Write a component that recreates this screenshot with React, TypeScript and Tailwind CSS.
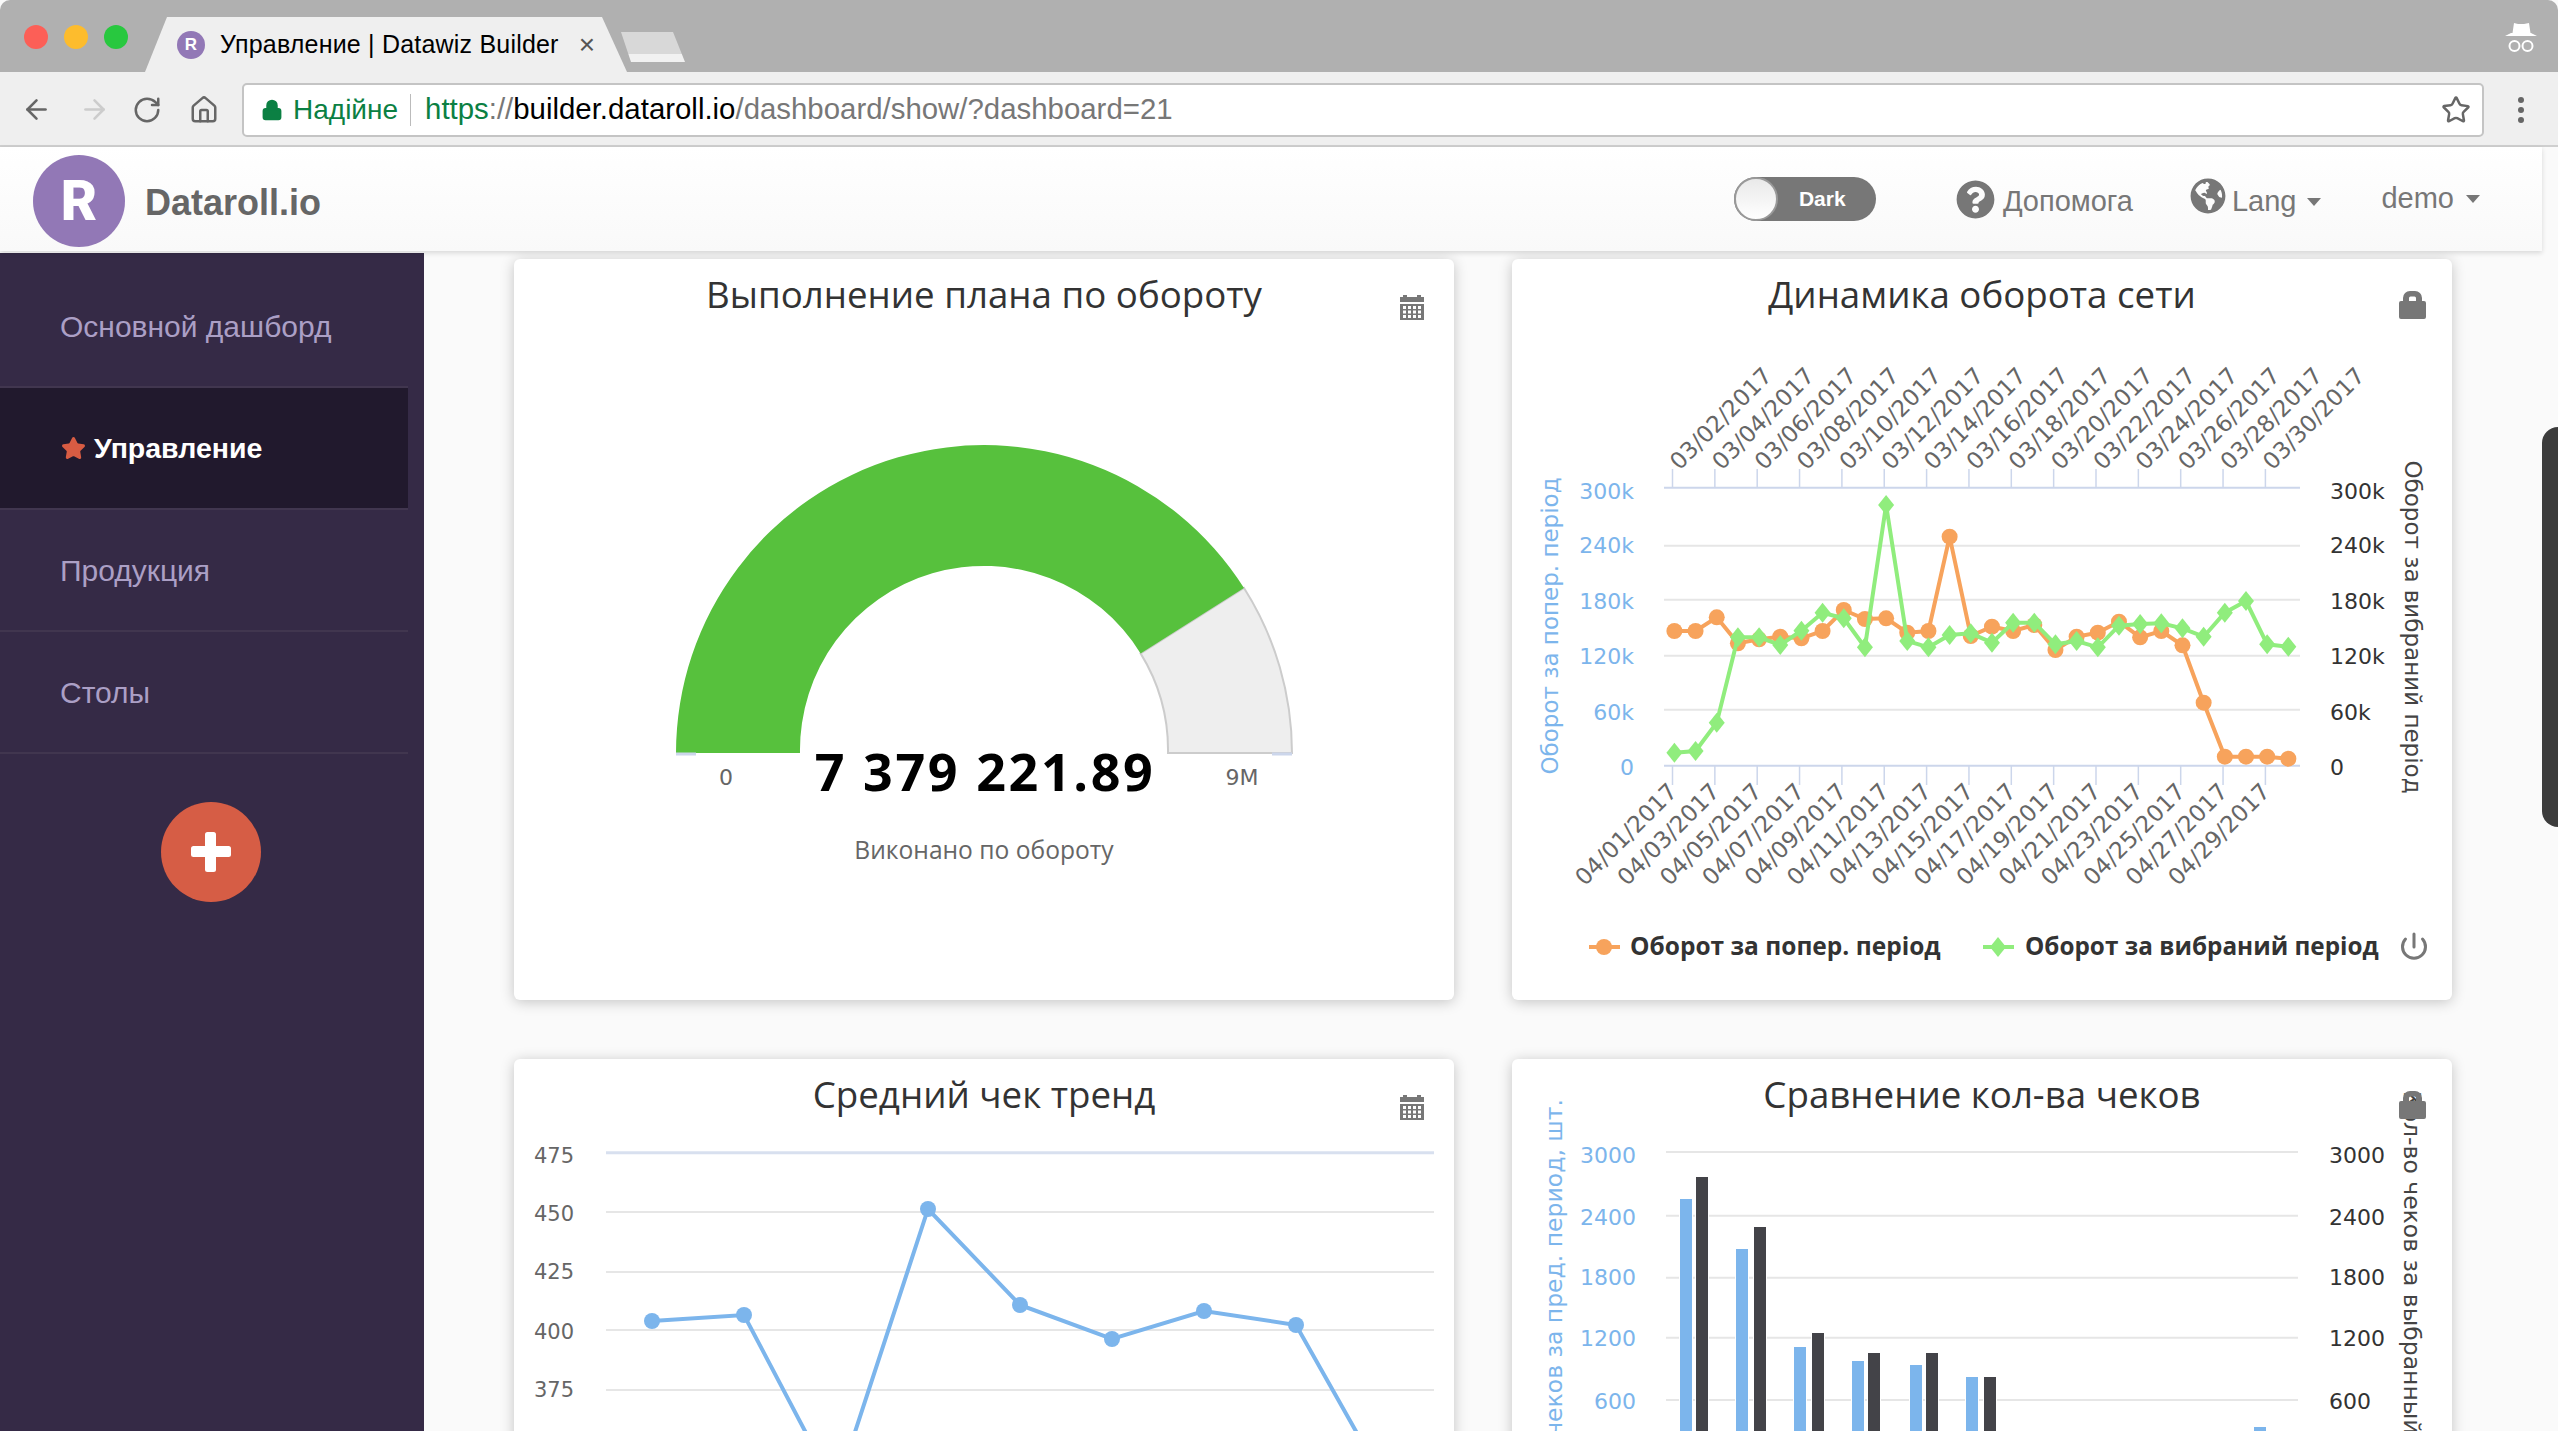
import { ArrowLeft, ArrowRight, Home, RotateCw, Lock, Star } from 'lucide-react';
import { FaGlobeAmericas, FaQuestionCircle } from 'react-icons/fa';

const CHART_FONT = '"DejaVu Sans", sans-serif';

// y positions are in card pixels, the x step is fixed (30 days)
const stepX = (i: number) => 162.4 + i * 21.17;
const prevPeriod = [372, 372, 358.3, 384.3, 380.3, 377.7, 379.3, 372, 351, 360, 359.3, 373.7, 372, 277.7, 377, 367.7, 372, 366, 391, 377.7, 373.7, 362.7, 378.3, 372, 386.3, 443.7, 497.7, 497.7, 497.7, 499.7];
const curPeriod = [493.7, 492, 463.7, 378.3, 378.3, 386, 371.7, 353.7, 359.3, 388.3, 246, 382, 388.3, 376, 374.3, 383.7, 363.7, 363.7, 385.3, 382, 388.3, 366.7, 365, 364.3, 369.3, 377.7, 353.7, 342, 385.3, 387.7];

const marchDays = ['02', '04', '06', '08', '10', '12', '14', '16', '18', '20', '22', '24', '26', '28', '30'];
const aprilDays = ['01', '03', '05', '07', '09', '11', '13', '15', '17', '19', '21', '23', '25', '27', '29'];

const checkAvg: [number, number][] = [[138, 262], [230, 256], [322, 431], [414, 150], [506, 246], [598, 280], [690, 252], [782, 266], [874, 429]];

const bars = [
  { x: 168, y: 140, dark: false }, { x: 184, y: 118, dark: true },
  { x: 224, y: 190, dark: false }, { x: 242, y: 168, dark: true },
  { x: 282, y: 288, dark: false }, { x: 300, y: 274, dark: true },
  { x: 340, y: 302, dark: false }, { x: 356, y: 294, dark: true },
  { x: 398, y: 306, dark: false }, { x: 414, y: 294, dark: true },
  { x: 454, y: 318, dark: false }, { x: 472, y: 318, dark: true },
  { x: 742, y: 368, dark: false },
];

function CalendarIcon() {
  return (
    <svg className="absolute right-[30px] top-[36px]" width="24" height="25" viewBox="0 0 24 25" fill="#777">
      <rect x="3" y="0" width="4" height="4" />
      <rect x="17" y="0" width="4" height="4" />
      <rect x="0" y="2" width="24" height="5" />
      <path fillRule="evenodd" d="M0 9h24v16H0z M3 11v3h3v-3z M8 11v3h3v-3z M13 11v3h3v-3z M18 11v3h3v-3z M3 15.500v3h3v-3z M8 15.500v3h3v-3z M13 15.500v3h3v-3z M18 15.500v3h3v-3z M3 20v3h3v-3z M8 20v3h3v-3z M13 20v3h3v-3z M18 20v3h3v-3z" />
    </svg>
  );
}

function LockIcon() {
  return (
    <svg className="absolute left-[887px] top-[32px]" width="27" height="28" viewBox="0 0 27 28" fill="#777">
      <path fillRule="evenodd" d="M4 10V7a7 7 0 0 1 7-7h5a7 7 0 0 1 7 7v3h2a2 2 0 0 1 2 2v14a2 2 0 0 1-2 2H2a2 2 0 0 1-2-2V12a2 2 0 0 1 2-2z M10 10h7V7a1.500 1.500 0 0 0-1.500-1.500h-4A1.500 1.500 0 0 0 10 7z" />
    </svg>
  );
}

function Card({ title, children }: { title: string; children: React.ReactNode }) {
  return (
    <div className="relative h-[741px] rounded-md bg-white shadow-[0_2px_14px_rgba(0,0,0,0.22)]">
      {children}
      <h2 className="relative pt-[9px] text-center text-[36.7px] leading-[52px] text-[#333]" style={{ fontFamily: '"Open Sans", sans-serif' }}>
        {title}
      </h2>
    </div>
  );
}

function Gauge() {
  return (
    <svg className="absolute inset-0" width="940" height="741" fontFamily={CHART_FONT}>
      <path d="M730 329A308 308 0 0 1 778 494H654A184 184 0 0 0 626.600 394.400Z" fill="#eeeeee" stroke="#cccccc" strokeWidth="2" />
      <path d="M162 494A308 308 0 0 1 730 329L626.600 394.400A184 184 0 0 0 286 494Z" fill="#57c13d" />
      <path d="M162 495H182M758 495H778" stroke="#ccd6eb" strokeWidth="3" />
      <text x="212" y="526" textAnchor="middle" fontSize="22" fill="#666">0</text>
      <text x="728" y="526" textAnchor="middle" fontSize="22" fill="#666">9M</text>
      <text x="471" y="532" textAnchor="middle" fontSize="52" fontWeight="700" fill="#000" fontFamily='"Open Sans", sans-serif' letterSpacing="2.6">7 379 221.89</text>
      <text x="470" y="600" textAnchor="middle" fontSize="24.600" fill="#666" fontFamily='"Open Sans", sans-serif'>Виконано по обороту</text>
    </svg>
  );
}

function TurnoverChart() {
  const rows = [[228.7, 240, '300k'], [286.7, 294, '240k'], [340.7, 350, '180k'], [396.7, 405, '120k'], [450.7, 461, '60k'], [506.7, 516, '0']] as const;
  const ticks = Array.from({ length: 15 }, (_, i) => 160.5 + i * 42.35);
  const line = (ys: number[]) => ys.map((y, i) => `${stepX(i)},${y}`).join(' ');

  return (
    <svg className="absolute inset-0" width="940" height="741" fontFamily={CHART_FONT}>
      {rows.map(([y, labelY, label], i) => (
        <g key={label}>
          <line x1="152" x2="788" y1={y} y2={y} stroke={i === 0 || i === 5 ? '#ccd6eb' : '#e6e6e6'} strokeWidth="2" />
          <text x="122" y={labelY} textAnchor="end" fontSize="22" fill="#7cb5ec">{label}</text>
          <text x="818" y={labelY} fontSize="22" fill="#333">{label}</text>
        </g>
      ))}
      {ticks.map((x, i) => (
        <g key={x}>
          <line x1={x} x2={x} y1="210" y2="228" stroke="#ccd6eb" strokeWidth="1.500" />
          <line x1={x} x2={x} y1="507" y2="526" stroke="#ccd6eb" strokeWidth="1.500" />
          <text transform={`translate(${x + 7} 212) rotate(-45)`} fontSize="23" fill="#666">03/{marchDays[i]}/2017</text>
          <text transform={`translate(${x + 6} 534) rotate(-45)`} textAnchor="end" fontSize="23" fill="#666">04/{aprilDays[i]}/2017</text>
        </g>
      ))}
      <polyline points={line(prevPeriod)} fill="none" stroke="#f7a35c" strokeWidth="4" />
      {prevPeriod.map((y, i) => <circle key={i} cx={stepX(i)} cy={y} r="8" fill="#f7a35c" />)}
      <polyline points={line(curPeriod)} fill="none" stroke="#90ed7d" strokeWidth="4" />
      {curPeriod.map((y, i) => (
        <path key={i} d={`M${stepX(i)} ${y - 10}l8 10l-8 10l-8 -10z`} fill="#90ed7d" />
      ))}
      <text transform="translate(46 367) rotate(-90)" textAnchor="middle" fontSize="23" fill="#7cb5ec">Оборот за попер. період</text>
      <text transform="translate(893 368) rotate(90)" textAnchor="middle" fontSize="23" fill="#444">Оборот за вибраний період</text>

      <line x1="77" x2="108" y1="688" y2="688" stroke="#f7a35c" strokeWidth="4" />
      <circle cx="92" cy="688" r="8" fill="#f7a35c" />
      <text x="118" y="696" fontSize="24.500" fontWeight="700" fill="#333" fontFamily='"Open Sans", sans-serif'>Оборот за попер. період</text>
      <line x1="471" x2="502" y1="688" y2="688" stroke="#90ed7d" strokeWidth="4" />
      <path d="M486 678l8 10l-8 10l-8 -10z" fill="#90ed7d" />
      <text x="513" y="696" fontSize="24.300" fontWeight="700" fill="#333" fontFamily='"Open Sans", sans-serif'>Оборот за вибраний період</text>
      <path d="M893.500 680a11.500 11.500 0 1 0 17 0M902 675v13" fill="none" stroke="#777" strokeWidth="3" strokeLinecap="round" />
    </svg>
  );
}

function AvgCheckChart() {
  const rows = [[93.7, 104, '475'], [153, 162, '450'], [213, 220, '425'], [271, 280, '400'], [331, 338, '375']] as const;
  return (
    <svg className="absolute inset-0" width="940" height="741" fontFamily={CHART_FONT}>
      {rows.map(([y, labelY, label], i) => (
        <g key={label}>
          <line x1="92" x2="920" y1={y} y2={y} stroke={i === 0 ? '#d8e0ef' : '#e6e6e6'} strokeWidth={i === 0 ? 3 : 2} />
          <text x="60" y={labelY} textAnchor="end" fontSize="21" fill="#666">{label}</text>
        </g>
      ))}
      <polyline points={checkAvg.map((p) => p.join(',')).join(' ')} fill="none" stroke="#7cb5ec" strokeWidth="4" />
      {checkAvg.map(([x, y]) => <circle key={x} cx={x} cy={y} r="8" fill="#7cb5ec" />)}
    </svg>
  );
}

function ChecksChart() {
  const rows = [[93, 104, '3000'], [156.7, 166, '2400'], [218.7, 226, '1800'], [278.7, 287, '1200'], [341, 350, '600']] as const;
  return (
    <svg className="absolute inset-0" width="940" height="741" fontFamily={CHART_FONT}>
      {rows.map(([y, labelY, label]) => (
        <g key={label}>
          <line x1="154" x2="786" y1={y} y2={y} stroke="#e6e6e6" strokeWidth="2" />
          <text x="124" y={labelY} textAnchor="end" fontSize="22" fill="#7cb5ec">{label}</text>
          <text x="817" y={labelY} fontSize="22" fill="#333">{label}</text>
        </g>
      ))}
      {bars.map((b) => (
        <rect key={b.x} x={b.x} y={b.y} width="12" height={500 - b.y} fill={b.dark ? '#434348' : '#7cb5ec'} stroke="#fff" strokeWidth="2" paintOrder="stroke" />
      ))}
      <text transform="translate(50 40) rotate(-90)" textAnchor="end" fontSize="23.500" fill="#7cb5ec">Кол-во чеков за пред. период, шт.</text>
      <text transform="translate(892 32) rotate(90)" fontSize="23.500" fill="#444">Кол-во чеков за выбранный период</text>
    </svg>
  );
}

function NavItem({ label, active }: { label: string; active?: boolean }) {
  return (
    <a className={`flex h-[122px] items-center border-b-2 border-[#41364f] pl-[60px] ${active ? 'bg-[#21192d] text-[28.500px] font-bold text-white' : 'text-[30px] text-[#ab9fc5]'}`}>
      {active && <Star className="mr-[8px] ml-[1px] size-[25px]" fill="#d85c43" stroke="#d85c43" />}
      {label}
    </a>
  );
}

export default function App() {
  return (
    <div className="flex h-[1431px] w-[2558px] flex-col overflow-hidden bg-[#fafafa]" style={{ fontFamily: '"Liberation Sans", Arial, sans-serif' }}>
      {/* window title bar */}
      <div className="relative flex h-[72px] shrink-0 rounded-t-[10px] bg-[#b0b0b0]">
        <div className="flex items-center gap-[16px] pl-[24px] pt-[2px]">
          <span className="size-[24px] rounded-full bg-[#fc5f57]" />
          <span className="size-[24px] rounded-full bg-[#fdbc2d]" />
          <span className="size-[24px] rounded-full bg-[#28c83f]" />
        </div>
        <div className="ml-[17px] mt-[17px] flex h-[55px] w-[482px] items-center bg-[#efefef] pl-[32px] [clip-path:polygon(22px_0,457px_0,100%_100%,0_100%)]">
          <span className="flex size-[28px] items-center justify-center rounded-full bg-[#9278b6] text-[17px] font-bold text-white">R</span>
          <span className="ml-[15px] text-[25px] tracking-[0.2px] text-black">Управление | Datawiz Builder</span>
          <span className="ml-[20px] text-[28px] text-[#555]">×</span>
        </div>
        <div className="mt-[32px] ml-[-6px] h-[30px] w-[64px] bg-[linear-gradient(#d8d8d8_75%,#f1f1f1_75%)] [clip-path:polygon(0_0,52px_0,100%_100%,10px_100%)]" />
        <svg className="absolute right-[21px] top-[22px]" width="32" height="32" viewBox="0 0 32 32" fill="#fff">
          <path d="M9 1l4 1h6l5-1 1.500 10H7.500zM0 14l6-3h20l6 3z" />
          <circle cx="9.500" cy="24" r="5" fill="none" stroke="#fff" strokeWidth="2" />
          <circle cx="22.500" cy="24" r="5" fill="none" stroke="#fff" strokeWidth="2" />
        </svg>
      </div>

      {/* toolbar */}
      <div className="flex h-[75px] shrink-0 items-center border-b-2 border-[#cfcfcf] bg-[#efefef] pt-[2px]">
        <div className="flex w-[242px] items-center text-[#666]">
          <ArrowLeft className="ml-[21px] size-[31px]" strokeWidth={2} />
          <ArrowRight className="ml-[27px] size-[31px] text-[#ccc]" strokeWidth={2} />
          <RotateCw className="ml-[22px] size-[30px]" strokeWidth={2} />
          <Home className="ml-[27px] size-[30px]" strokeWidth={2} />
        </div>
        <div className="flex h-[54px] w-[2242px] items-center rounded-[5px] border-2 border-[#c4c4c4] bg-white pl-[17px] text-[29.400px]">
          <Lock className="size-[22px] text-[#0b8043]" fill="#0b8043" strokeWidth={2.5} />
          <span className="ml-[10px] text-[28px] text-[#0b8043]">Надійне</span>
          <span className="ml-[12px] h-[32px] w-px bg-[#bbb]" />
          <span className="ml-[14px] text-[#0b8043]">https</span>
          <span className="text-[#777]">://</span>
          <span className="text-black">builder.dataroll.io</span>
          <span className="text-[#777]">/dashboard/show/?dashboard=21</span>
          <Star className="ml-auto mr-[11px] size-[30px] text-[#666]" strokeWidth={2} />
        </div>
        <div className="ml-[34px] flex flex-col gap-[4px]">
          <span className="size-[6px] rounded-full bg-[#666]" />
          <span className="size-[6px] rounded-full bg-[#666]" />
          <span className="size-[6px] rounded-full bg-[#666]" />
        </div>
      </div>

      {/* app header */}
      <header className="relative z-10 flex h-[104px] w-[2542px] shrink-0 items-center bg-[linear-gradient(#ffffff,#f9f9f9)] pl-[33px] pt-[4px] shadow-[0_2px_5px_rgba(0,0,0,0.14)]">
        <span className="flex size-[92px] items-center justify-center rounded-full bg-[#9278b6] text-[56px] font-black text-white" style={{ fontFamily: 'Roboto, sans-serif' }}>R</span>
        <span className="ml-[20px] mt-[4px] text-[36px] font-bold text-[#666]">Dataroll.io</span>
        <div className="relative ml-auto mb-[4px] flex h-[44px] w-[142px] items-center rounded-full bg-[#777] pl-[65px] text-[21px] font-bold text-white">
          <span className="absolute left-0 top-0 size-[44px] rounded-full border-2 border-[#999] bg-[linear-gradient(#e9e9e9,#fff)]" />
          Dark
        </div>
        <FaQuestionCircle className="ml-[80px] mb-[4px] size-[39px] text-[#777]" />
        <span className="ml-[8px] mt-[2px] text-[29px] text-[#777]">Допомога</span>
        <FaGlobeAmericas className="ml-[57px] mb-[10px] size-[36px] text-[#777]" />
        <span className="ml-[6px] mt-[2px] text-[29px] text-[#777]">Lang</span>
        <span className="ml-[11px] mt-[2px] border-x-[7px] border-t-[8px] border-x-transparent border-t-[#777]" />
        <span className="ml-[60px] mb-[4px] text-[29px] text-[#777]">demo</span>
        <span className="ml-[12px] mr-[62px] mb-[4px] border-x-[7px] border-t-[8px] border-x-transparent border-t-[#777]" />
      </header>

      <div className="relative flex min-h-0 flex-1">
        <aside className="mt-[2px] w-[424px] shrink-0 bg-[#352a46] pt-[13px]">
          <nav className="mr-[16px]">
            <NavItem label="Основной дашборд" />
            <NavItem label="Управление" active />
            <NavItem label="Продукция" />
            <NavItem label="Столы" />
          </nav>
          <button className="ml-[161px] mt-[48px] flex size-[100px] items-center justify-center rounded-full bg-[#d65d45]">
            <svg width="40" height="40" viewBox="0 0 40 40" fill="#fff">
              <rect x="14" y="0" width="11" height="40" rx="2.500" />
              <rect x="0" y="14" width="40" height="11" rx="2.500" />
            </svg>
          </button>
        </aside>

        <main className="grid grid-cols-[940px_940px] content-start gap-x-[58px] gap-y-[59px] pl-[90px] pt-[8px]">
          <Card title="Выполнение плана по обороту">
            <Gauge />
            <CalendarIcon />
          </Card>
          <Card title="Динамика оборота сети">
            <TurnoverChart />
            <LockIcon />
          </Card>
          <Card title="Средний чек тренд">
            <AvgCheckChart />
            <CalendarIcon />
          </Card>
          <Card title="Сравнение кол-ва чеков">
            <ChecksChart />
            <LockIcon />
          </Card>
        </main>

        {/* scrollbar thumb */}
        <div className="absolute right-0 top-[176px] h-[400px] w-[16px] rounded-l-full bg-[#3c3c3c]" />
      </div>
    </div>
  );
}
